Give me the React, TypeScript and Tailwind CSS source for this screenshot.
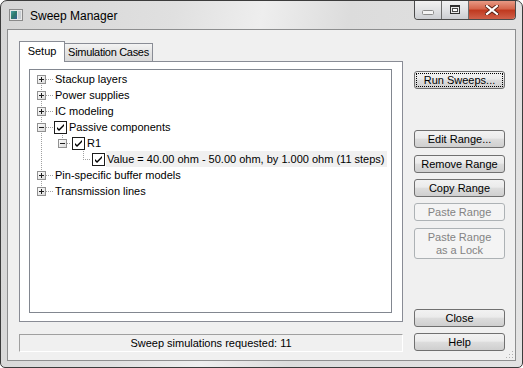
import clsx from 'clsx';

type Row = {
  label: string;
  level: 0 | 1 | 2;
  exp?: 'plus' | 'minus';
  check?: boolean;
  sel?: boolean;
};

const rows: Row[] = [
  { label: 'Stackup layers', level: 0, exp: 'plus' },
  { label: 'Power supplies', level: 0, exp: 'plus' },
  { label: 'IC modeling', level: 0, exp: 'plus' },
  { label: 'Passive components', level: 0, exp: 'minus', check: true },
  { label: 'R1', level: 1, exp: 'minus', check: true },
  { label: 'Value = 40.00 ohm - 50.00 ohm, by 1.000 ohm (11 steps)', level: 2, check: true, sel: true },
  { label: 'Pin-specific buffer models', level: 0, exp: 'plus' },
  { label: 'Transmission lines', level: 0, exp: 'plus' },
];

// x of each level's connector line, inside the tree box
const lineX = [11, 32, 53];
const startX = [24, 42, 62];

function VLine({ x, y1, y2 }: { x: number; y1: number; y2: number }) {
  return (
    <line x1={x + 0.5} x2={x + 0.5} y1={y1} y2={y2} stroke="#a0a0a0" strokeDasharray="1 1" />
  );
}

function HLine({ x1, x2 }: { x1: number; x2: number }) {
  return <line x1={x1} x2={x2} y1={8.5} y2={8.5} stroke="#a0a0a0" strokeDasharray="1 1" />;
}

function Expander({ cx, kind }: { cx: number; kind: 'plus' | 'minus' }) {
  return (
    <g>
      <rect x={cx - 4 + 0.5} y={4.5} width={8} height={8} fill="url(#expg)" stroke="#919191" />
      <line x1={cx - 2} x2={cx + 3} y1={8.5} y2={8.5} stroke="#1e1e1e" />
      {kind === 'plus' && <line x1={cx + 0.5} x2={cx + 0.5} y1={6} y2={11} stroke="#1e1e1e" />}
    </g>
  );
}

function CheckBox() {
  return (
    <svg width="13" height="13" viewBox="0 0 13 13" className="shrink-0" shapeRendering="crispEdges">
      <rect x="0.5" y="0.5" width="12" height="12" fill="#fff" stroke="#1c1c1c" />
      <path d="M3 6 L5 8 L10 3 L10 5 L5 10 L3 8 Z" fill="#000" shapeRendering="auto" />
    </svg>
  );
}

function TreeRow({ row, index }: { row: Row; index: number }) {
  const last = index === rows.length - 1;
  const w = startX[row.level];
  return (
    <div className="flex h-[16px] items-center">
      <svg width={w} height="16" className="shrink-0" shapeRendering="crispEdges">
        <defs>
          <linearGradient id="expg" x1="0" y1="0" x2="0.8" y2="1">
            <stop offset="0" stopColor="#ffffff" />
            <stop offset="1" stopColor="#dcdcdc" />
          </linearGradient>
        </defs>
        <VLine x={lineX[0]} y1={index === 0 ? 8 : 0} y2={last ? 9 : 16} />
        {row.level === 0 && <HLine x1={lineX[0] + 5} x2={23} />}
        {row.level === 1 && (
          <>
            <VLine x={lineX[1]} y1={0} y2={9} />
            <HLine x1={lineX[1] + 5} x2={41} />
          </>
        )}
        {row.level === 2 && (
          <>
            <VLine x={lineX[2]} y1={0} y2={9} />
            <HLine x1={lineX[2] + 2} x2={61} />
          </>
        )}
        {row.exp && <Expander cx={lineX[row.level]} kind={row.exp} />}
      </svg>
      {row.check && (
        <div className="mr-[1px]">
          <CheckBox />
        </div>
      )}
      <span
        className={clsx(
          'whitespace-nowrap text-[11px] leading-[16px] text-black',
          row.sel ? 'bg-[#f0f0f0] pl-[1px] pr-[2px]' : 'pl-[1px]'
        )}
      >
        {row.label}
      </span>
    </div>
  );
}

function Btn({
  children,
  disabled,
  focus,
  className,
}: {
  children: React.ReactNode;
  disabled?: boolean;
  focus?: boolean;
  className?: string;
}) {
  return (
    <div
      className={clsx(
        'flex h-[18px] w-[91px] shrink-0 rounded-[3px] border text-center text-[11px] leading-[13px]',
        disabled
          ? 'border-[#adb2b5] bg-[#f4f4f4] text-[#838383]'
          : 'border-[#707070] bg-[linear-gradient(#f2f2f2,#ebebeb_45%,#dddddd_50%,#cfcfcf)] text-black',
        className
      )}
    >
      <div
        className={clsx(
          'm-[1px] flex flex-1 items-center justify-center',
          focus && 'border border-dotted border-black'
        )}
      >
        <span>{children}</span>
      </div>
    </div>
  );
}

function TitleIcon() {
  return (
    <svg width="14" height="12" viewBox="0 0 14 12" shapeRendering="crispEdges">
      <defs>
        <linearGradient id="ticon" x1="0" y1="0" x2="1" y2="1">
          <stop offset="0" stopColor="#4a9fa8" />
          <stop offset="0.5" stopColor="#2f7a6a" />
          <stop offset="1" stopColor="#3a5f9a" />
        </linearGradient>
      </defs>
      <rect x="0.5" y="0.5" width="13" height="11" fill="#e8e8e8" stroke="#8a8a8a" />
      <rect x="2" y="2" width="6" height="8" fill="url(#ticon)" />
      <rect x="9" y="2" width="3" height="8" fill="#c8cdd2" />
    </svg>
  );
}

function CaptionButtons() {
  return (
    <div className="-mt-px mr-[6px] ml-auto flex h-[20px] overflow-hidden rounded-b-[4px] border border-t-0 border-[#4b4b4b]">
      <div className="flex w-[27px] items-center justify-center border-r border-[#6e6e6e] bg-[linear-gradient(#f3f3f3,#e2e3e5_50%,#ccced2)]">
        <svg width="12" height="5" viewBox="0 0 12 5" className="mt-[5px]">
          <rect x="0.5" y="0.5" width="11" height="4" rx="1" fill="#f4f4f4" stroke="#8c8c8c" />
        </svg>
      </div>
      <div className="flex w-[27px] items-center justify-center border-r border-[#6e6e6e] bg-[linear-gradient(#f3f3f3,#e2e3e5_50%,#ccced2)]">
        <svg width="10" height="9" viewBox="0 0 10 9" shapeRendering="crispEdges">
          <rect x="0.5" y="0.5" width="9" height="8" fill="#eaeaea" stroke="#2f2f2f" />
          <rect x="1" y="1" width="8" height="1" fill="#2f2f2f" />
          <rect x="2.5" y="3.5" width="5" height="3" fill="#ffffff" stroke="#4a4a4a" />
        </svg>
      </div>
      <div className="flex w-[46px] items-center justify-center bg-[linear-gradient(#e9a08c,#d5674d_45%,#c03a20_55%,#d0614a)]">
        <svg width="14" height="10" viewBox="0 0 14 10">
          <path d="M2 1 L12 9 M12 1 L2 9" stroke="#5a2216" strokeWidth="4" strokeLinecap="square" />
          <path d="M2 1 L12 9 M12 1 L2 9" stroke="#ffffff" strokeWidth="2.2" strokeLinecap="square" />
        </svg>
      </div>
    </div>
  );
}

export default function App() {
  return (
    <div className="flex h-[368px] w-[523px] select-none flex-col overflow-hidden rounded-t-[7px] rounded-b-[5px] border border-[#3c3c3c] bg-[linear-gradient(100deg,#d5d5d5_0%,#e0e0e0_30%,#eeeeee_45%,#dcdcdc_60%,#e3e3e3_100%)] font-['Liberation_Sans',Arial,sans-serif]">
      <div className="flex h-[28px] shrink-0 items-start">
        <div className="mt-[8px] ml-[8px]">
          <TitleIcon />
        </div>
        <span className="mt-[7px] ml-[7px] text-[12px] leading-[16px] text-black">Sweep Manager</span>
        <CaptionButtons />
      </div>

      <div className="relative mx-[6px] mb-[6px] flex flex-1 gap-[11px] border border-[#8d8e8f] bg-[#f0f0f0] pt-[11px] pr-[10px] pb-[8px] pl-[11px]">
        <div className="flex w-[384px] flex-col">
          <div className="flex h-[21px] items-end">
            <div className="relative z-10 flex h-[21px] w-[46px] items-center justify-center border-x border-t border-[#898c95] bg-white pb-[1px] text-[11px] text-black">
              Setup
            </div>
            <div className="-ml-px flex h-[19px] w-[89px] items-center justify-center border-x border-t border-[#898c95] bg-[linear-gradient(#f3f3f3,#e3e3e3_50%,#d9d9d9)] pb-[1px] text-[11px] tracking-[-0.3px] text-black">
              Simulation Cases
            </div>
          </div>
          <div className="-mt-px flex h-[261px] border border-[#898c95] bg-white pt-[7px] pr-[10px] pb-[8px] pl-[9px]">
            <div className="flex flex-1 flex-col border border-[#828790] bg-white pt-[1px]">
              {rows.map((r, i) => (
                <TreeRow key={i} row={r} index={i} />
              ))}
            </div>
          </div>
          <div className="mt-[12px] flex h-[18px] items-center justify-center border-t border-l border-[#a0a0a0] border-r-white border-b-white border-r border-b text-[11px] text-black">
            Sweep simulations requested: 11
          </div>
        </div>

        <div className="flex w-[91px] flex-col">
          <Btn focus className="mt-[30px]">
            Run Sweeps...
          </Btn>
          <Btn className="mt-[41px]">Edit Range...</Btn>
          <Btn className="mt-[7px]">Remove Range</Btn>
          <Btn className="mt-[6px]">Copy Range</Btn>
          <Btn disabled className="mt-[6px]">
            Paste Range
          </Btn>
          <Btn disabled className="mt-[7px] h-[31px]">
            Paste Range
            <br />
            as a Lock
          </Btn>
          <Btn className="mt-auto">Close</Btn>
          <Btn className="mt-[6px] mb-[1px]">Help</Btn>
        </div>

        <svg width="8" height="8" viewBox="0 0 8 8" className="absolute right-[1px] bottom-[1px]" shapeRendering="crispEdges">
          <rect x="6" y="0" width="1" height="1" fill="#b0b0b0" />
          <rect x="3" y="3" width="1" height="1" fill="#b0b0b0" />
          <rect x="6" y="3" width="1" height="1" fill="#b0b0b0" />
          <rect x="0" y="6" width="1" height="1" fill="#b0b0b0" />
          <rect x="3" y="6" width="1" height="1" fill="#b0b0b0" />
          <rect x="6" y="6" width="1" height="1" fill="#b0b0b0" />
        </svg>
      </div>
    </div>
  );
}
